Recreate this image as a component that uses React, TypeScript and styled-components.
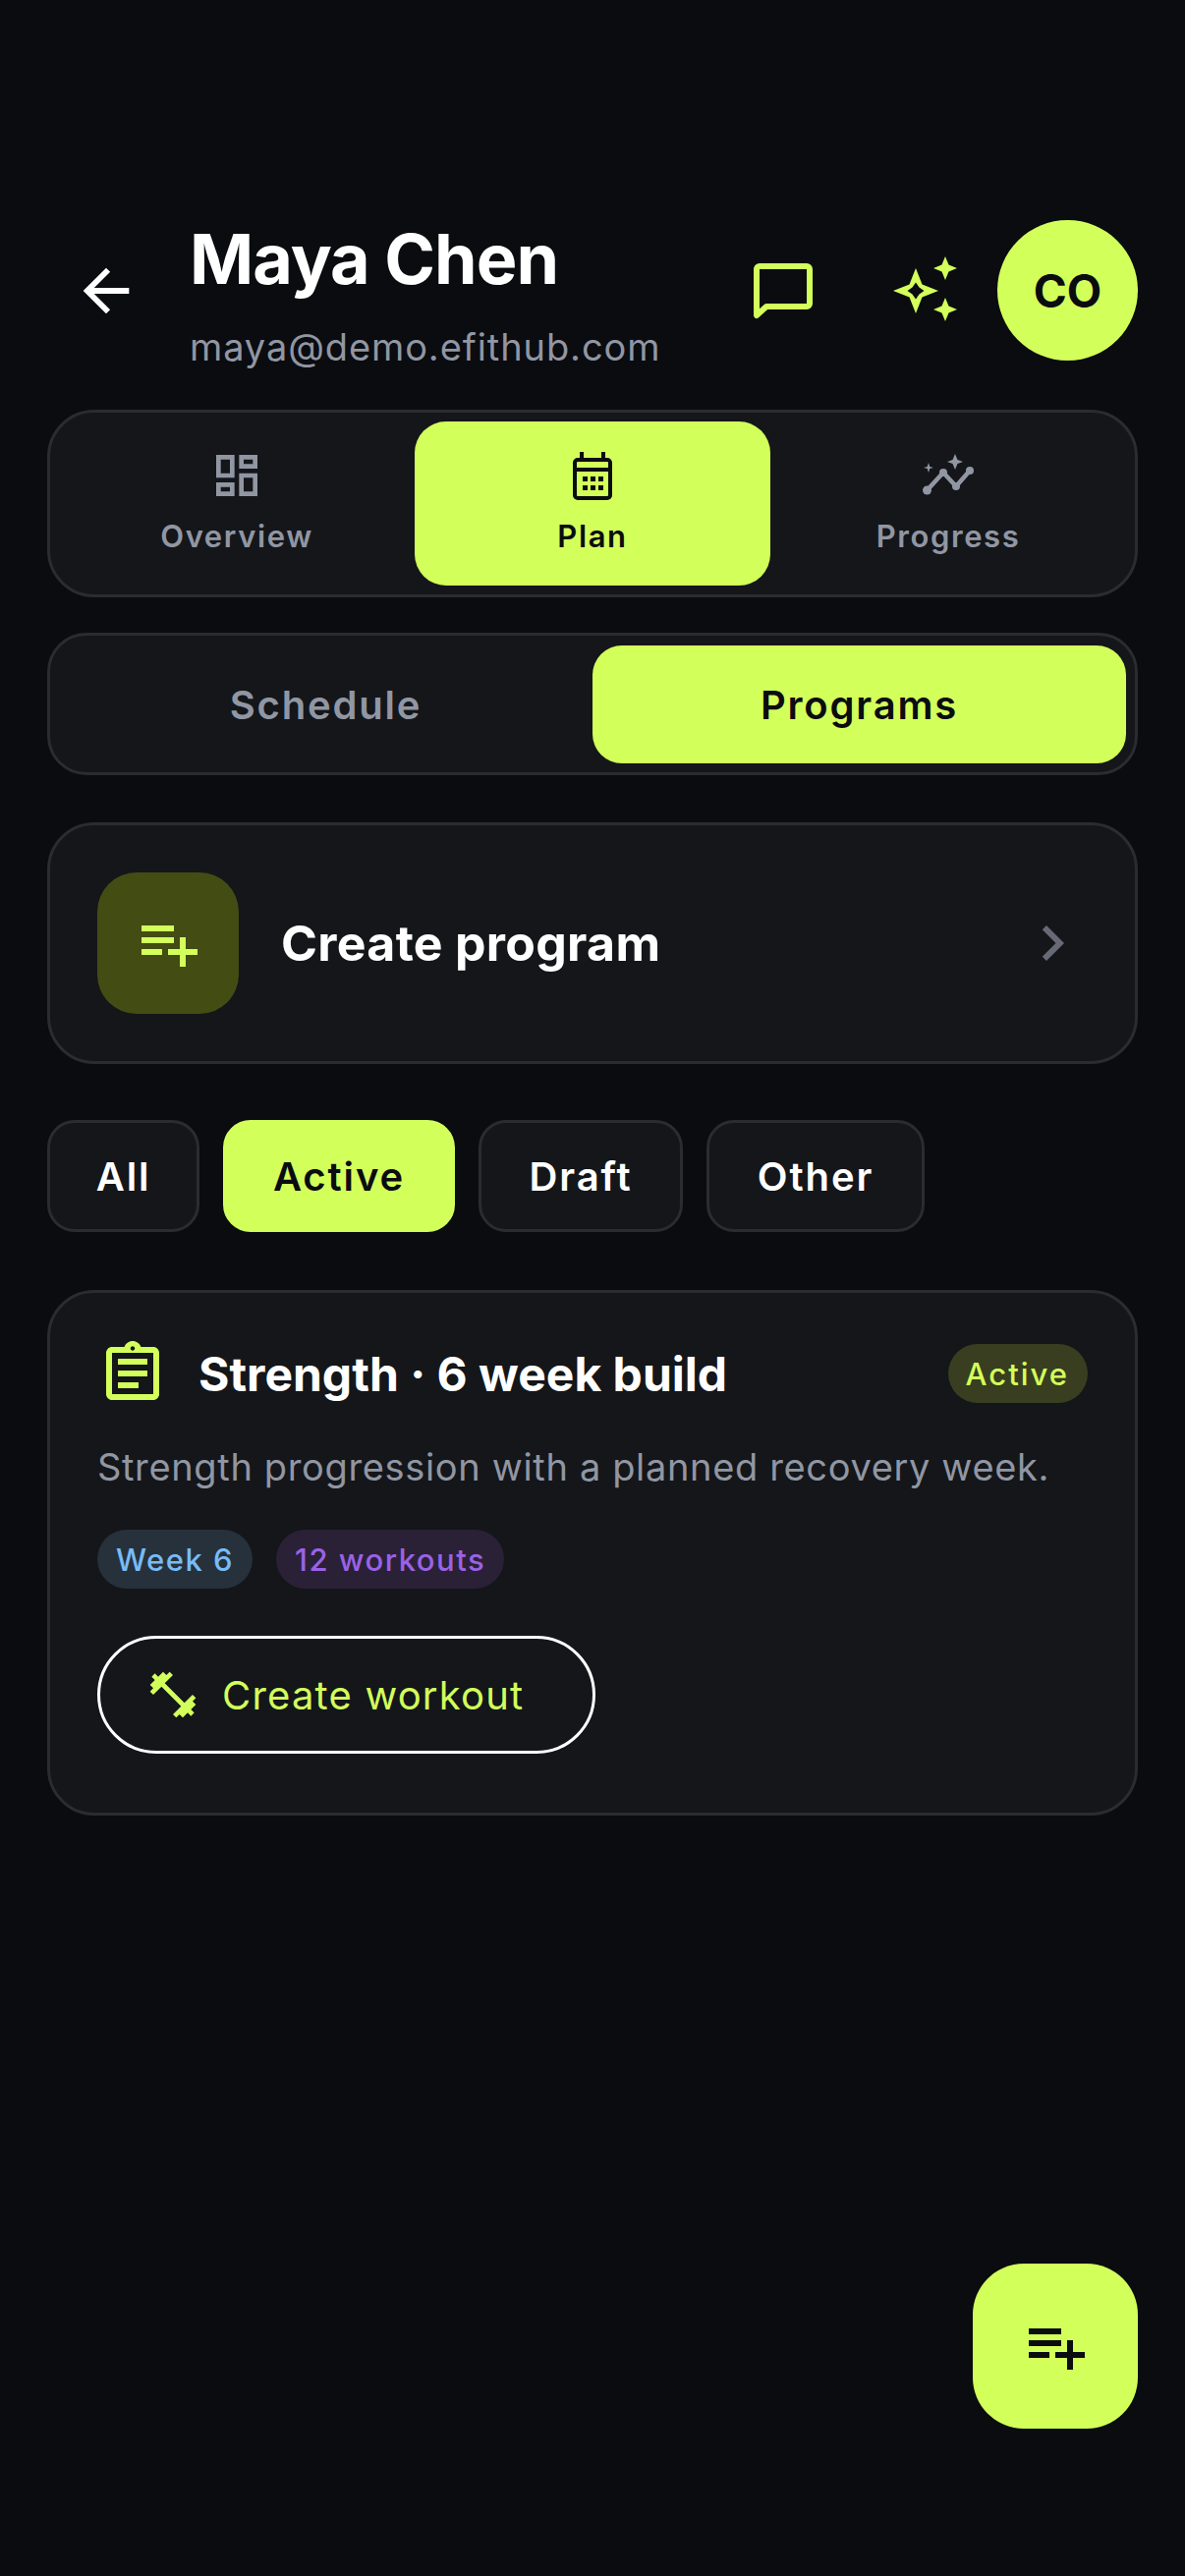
import React from 'react';
import styled, { createGlobalStyle } from 'styled-components';
import {
  MdArrowBack,
  MdChevronRight,
  MdFitnessCenter,
  MdOutlineAssignment,
  MdOutlineDashboard,
  MdPlaylistAdd,
} from 'react-icons/md';

const lime = '#d3ff5b';
const muted = '#9196a3';
const panel = '#14161a';
const line = '#2a2c31';

const GlobalStyle = createGlobalStyle`
  html, body {
    margin: 0;
    padding: 0;
    background: #0a0c10;
  }
  * {
    box-sizing: border-box;
  }
`;

const Page = styled.div`
  position: relative;
  width: 1206px;
  height: 2622px;
  padding: 224px 48px 0;
  background: #0a0c10;
  font-family: "Inter", "Liberation Sans", sans-serif;
  color: #fff;
  overflow: hidden;
`;

const Header = styled.header`
  display: flex;
  align-items: center;
  height: 143px;
`;

const BackIcon = styled(MdArrowBack)`
  flex: none;
  width: 70px;
  height: 70px;
  margin: 0 50px 0 25px;
  color: #fff;
`;

const Who = styled.div`
  flex: 1;
  min-width: 0;
  padding-top: 8px;
`;

const Name = styled.h1`
  margin: 0;
  font-size: 70px;
  line-height: 80px;
  font-weight: 700;
  letter-spacing: -1px;
`;

const Email = styled.div`
  margin-top: 27px;
  font-size: 38px;
  line-height: 44px;
  letter-spacing: 0.9px;
  color: ${muted};
`;

const ChatIcon = styled.svg`
  flex: none;
  width: 72px;
  height: 72px;
  margin-right: 76px;
`;

const SparkIcon = styled.svg`
  flex: none;
  width: 66px;
  height: 70px;
  margin-right: 40px;
`;

const Avatar = styled.div`
  flex: none;
  width: 143px;
  height: 143px;
  border-radius: 50%;
  background: ${lime};
  color: #0a0c10;
  display: flex;
  align-items: center;
  justify-content: center;
  font-size: 46px;
  font-weight: 700;
`;

const Panel = styled.div`
  background: ${panel};
  border: 3px solid ${line};
  border-radius: 48px;
`;

const MainTabs = styled(Panel)`
  display: grid;
  grid-template-columns: repeat(3, 1fr);
  height: 191px;
  margin-top: 50px;
  padding: 9px;
`;

const MainTab = styled.div<{ $active?: boolean }>`
  display: flex;
  flex-direction: column;
  align-items: center;
  justify-content: center;
  gap: 14px;
  padding-bottom: 3px;
  border-radius: 32px;
  background: ${props => (props.$active ? lime : 'transparent')};
  color: ${props => (props.$active ? '#0a0c10' : muted)};
  font-size: 31px;
  line-height: 40px;
  font-weight: 600;
  letter-spacing: 1.6px;
  svg {
    width: 56px;
    height: 56px;
  }
`;

const SubTabs = styled(Panel)`
  display: grid;
  grid-template-columns: 1fr 1fr;
  height: 145px;
  margin-top: 36px;
  padding: 10px 9px 9px;
  border-radius: 40px;
`;

const SubTab = styled.div<{ $active?: boolean }>`
  display: flex;
  align-items: center;
  justify-content: center;
  border-radius: 30px;
  background: ${props => (props.$active ? lime : 'transparent')};
  color: ${props => (props.$active ? '#0a0c10' : muted)};
  font-size: 40px;
  font-weight: 600;
  letter-spacing: 1.8px;
`;

const CreateCard = styled(Panel)`
  display: flex;
  align-items: center;
  height: 246px;
  margin-top: 48px;
  padding: 0 48px;
`;

const CreateIcon = styled.div`
  flex: none;
  display: flex;
  align-items: center;
  justify-content: center;
  width: 144px;
  height: 144px;
  border-radius: 40px;
  background: #434c13;
  color: ${lime};
`;

const CreateLabel = styled.div`
  flex: 1;
  margin-left: 43px;
  font-size: 50px;
  font-weight: 700;
  letter-spacing: 0.3px;
`;

const Chevron = styled(MdChevronRight)`
  flex: none;
  width: 72px;
  height: 72px;
  color: #666a75;
`;

const Filters = styled.div`
  display: flex;
  gap: 24px;
  margin-top: 57px;
`;

const Filter = styled.div<{ $active?: boolean; $width: number }>`
  display: flex;
  align-items: center;
  justify-content: center;
  width: ${props => props.$width}px;
  height: 114px;
  border-radius: 28px;
  border: 3px solid ${props => (props.$active ? lime : line)};
  background: ${props => (props.$active ? lime : panel)};
  color: ${props => (props.$active ? '#0a0c10' : '#fff')};
  font-size: 40px;
  font-weight: 600;
  letter-spacing: 1.9px;
`;

const ProgramCard = styled(Panel)`
  margin-top: 59px;
  height: 535px;
  padding: 47px 48px 0;
`;

const TitleRow = styled.div`
  display: flex;
  align-items: center;
  height: 70px;
`;

const ClipIcon = styled(MdOutlineAssignment)`
  flex: none;
  width: 72px;
  height: 72px;
  color: ${lime};
`;

const ProgramTitle = styled.div`
  flex: 1;
  margin-left: 31px;
  font-size: 48px;
  font-weight: 700;
`;

const StatusBadge = styled.div`
  display: flex;
  align-items: center;
  height: 60px;
  padding: 0 19px 0 18px;
  border-radius: 30px;
  background: #383e1f;
  color: ${lime};
  font-size: 31px;
  font-weight: 500;
  letter-spacing: 2px;
`;

const Description = styled.p`
  margin: 36px 0 0;
  font-size: 38px;
  line-height: 48px;
  letter-spacing: 0.65px;
  color: ${muted};
`;

const Chips = styled.div`
  display: flex;
  gap: 24px;
  margin-top: 40px;
`;

const Chip = styled.div<{ $bg: string; $fg: string }>`
  display: flex;
  align-items: center;
  height: 60px;
  padding: 0 19px;
  border-radius: 30px;
  background: ${props => props.$bg};
  color: ${props => props.$fg};
  font-size: 31px;
  font-weight: 500;
  letter-spacing: 1.5px;
`;

const WorkoutButton = styled.div`
  display: inline-flex;
  align-items: center;
  gap: 22px;
  width: 507px;
  height: 120px;
  margin-top: 48px;
  padding-left: 46px;
  border: 3px solid #fff;
  border-radius: 60px;
  color: ${lime};
  font-size: 40px;
  font-weight: 400;
  letter-spacing: 1.2px;
`;

const Dumbbell = styled(MdFitnessCenter)`
  flex: none;
  width: 56px;
  height: 56px;
`;

const Fab = styled.div`
  position: absolute;
  left: 990px;
  top: 2304px;
  width: 168px;
  height: 168px;
  display: flex;
  align-items: center;
  justify-content: center;
  border-radius: 52px;
  background: ${lime};
  color: #0a0c10;
`;

const CalendarGlyph: React.FC = () => (
  <svg viewBox="0 0 56 56" fill="currentColor">
    <path d="M15 4h4v6h18V4h4v6h2a5 5 0 0 1 5 5v33a5 5 0 0 1-5 5H13a5 5 0 0 1-5-5V15a5 5 0 0 1 5-5h2V4zm-3 11v5h32v-5a1 1 0 0 0-1-1H13a1 1 0 0 0-1 1zm0 9v24a1 1 0 0 0 1 1h30a1 1 0 0 0 1-1V24H12z" fillRule="evenodd" />
    <path d="M18 29h5v5h-5zM26 29h5v5h-5zM34 29h5v5h-5zM18 38h5v5h-5zM26 38h5v5h-5zM34 38h5v5h-5z" />
  </svg>
);

const ProgressGlyph: React.FC = () => (
  <svg viewBox="0 0 56 56" fill="currentColor">
    <path d="M6.5 43L23 25L36 39L50 23" fill="none" stroke="currentColor" strokeWidth="4.5" strokeLinejoin="round" />
    <circle cx="6.5" cy="43" r="4.5" />
    <circle cx="23" cy="25" r="4" />
    <circle cx="36" cy="39" r="4" />
    <circle cx="50" cy="23" r="4" />
    <path d="M35 6L37.5 12L43 14L37.5 16L35 22L32.5 16L27 14L32.5 12Z" />
    <path d="M8 15L9.3 19L13 20L9.3 21L8 25L6.7 21L3 20L6.7 19Z" />
  </svg>
);

const App: React.FC = () => {
  return (
    <Page>
      <GlobalStyle />
      <Header>
        <BackIcon />
        <Who>
          <Name>Maya Chen</Name>
          <Email>maya@demo.efithub.com</Email>
        </Who>
        <ChatIcon viewBox="0 0 72 72" fill="none" stroke={lime} strokeWidth="6" strokeLinejoin="round">
          <path d="M9 61V14a3 3 0 0 1 3-3h48a3 3 0 0 1 3 3v35a3 3 0 0 1-3 3H19z" />
        </ChatIcon>
        <SparkIcon viewBox="0 0 66 70" fill={lime}>
          <path
            fillRule="evenodd"
            d="M23 12L29.5 28.5L46 35L29.5 41.5L23 58L16.5 41.5L0 35L16.5 28.5ZM23 26.5L19.5 31.5L14.5 35L19.5 38.5L23 43.5L26.5 38.5L31.5 35L26.5 31.5Z"
          />
          <path d="M53 0L56.5 8.5L65 12L56.5 15.5L53 24L49.5 15.5L41 12L49.5 8.5Z" />
          <path d="M53 42L56.5 50.5L65 54L56.5 57.5L53 66L49.5 57.5L41 54L49.5 50.5Z" />
        </SparkIcon>
        <Avatar>CO</Avatar>
      </Header>

      <MainTabs>
        <MainTab>
          <MdOutlineDashboard />
          Overview
        </MainTab>
        <MainTab $active>
          <CalendarGlyph />
          Plan
        </MainTab>
        <MainTab>
          <ProgressGlyph />
          Progress
        </MainTab>
      </MainTabs>

      <SubTabs>
        <SubTab>Schedule</SubTab>
        <SubTab $active>Programs</SubTab>
      </SubTabs>

      <CreateCard>
        <CreateIcon>
          <MdPlaylistAdd size={72} />
        </CreateIcon>
        <CreateLabel>Create program</CreateLabel>
        <Chevron />
      </CreateCard>

      <Filters>
        <Filter $width={155}>All</Filter>
        <Filter $active $width={236}>Active</Filter>
        <Filter $width={208}>Draft</Filter>
        <Filter $width={222}>Other</Filter>
      </Filters>

      <ProgramCard>
        <TitleRow>
          <ClipIcon />
          <ProgramTitle>Strength · 6 week build</ProgramTitle>
          <StatusBadge>Active</StatusBadge>
        </TitleRow>
        <Description>Strength progression with a planned recovery week.</Description>
        <Chips>
          <Chip $bg="#26313c" $fg="#78bcf5">Week 6</Chip>
          <Chip $bg="#2a2136" $fg="#9a62e6">12 workouts</Chip>
        </Chips>
        <WorkoutButton>
          <Dumbbell />
          Create workout
        </WorkoutButton>
      </ProgramCard>

      <Fab>
        <MdPlaylistAdd size={72} />
      </Fab>
    </Page>
  );
};

export default App;
